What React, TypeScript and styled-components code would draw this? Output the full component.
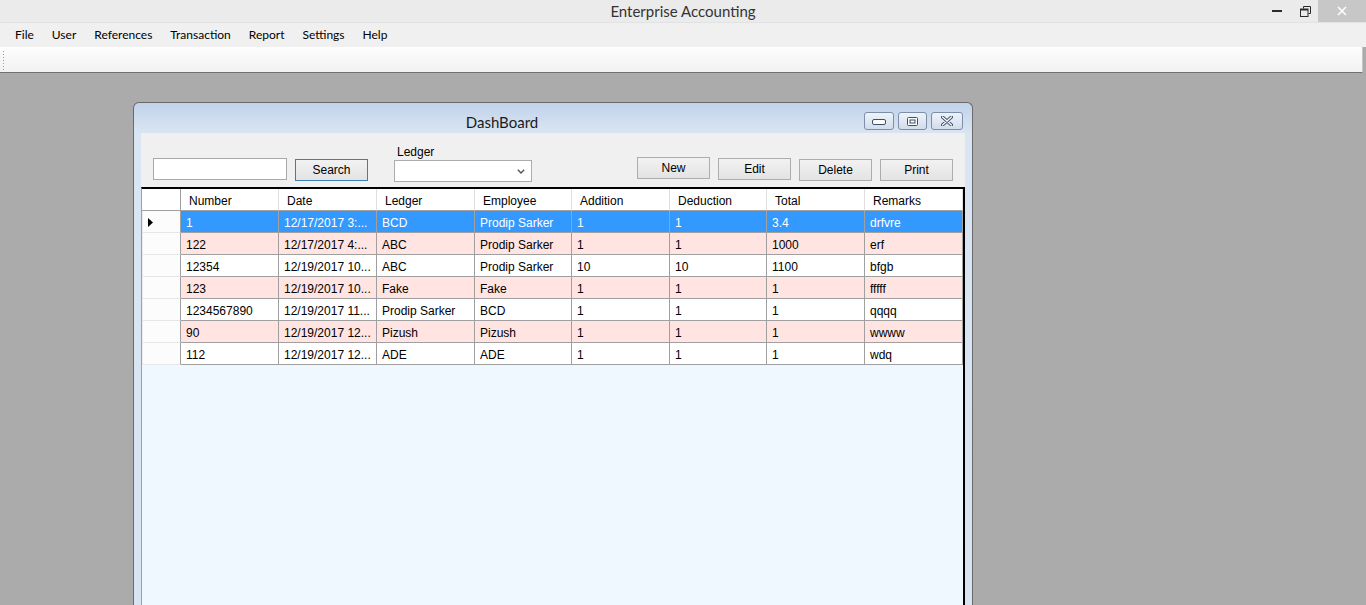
import React from "react";
import styled, { createGlobalStyle } from "styled-components";

const GlobalStyle = createGlobalStyle`
  html, body { margin: 0; padding: 0; }
  body {
    width: 1366px;
    height: 605px;
    overflow: hidden;
    background: #ababab;
    font-family: "Liberation Sans", Arial, sans-serif;
  }
  * { box-sizing: border-box; }
`;

const Screen = styled.div`
  width: 1366px;
  height: 605px;
  display: flex;
  flex-direction: column;
  overflow: hidden;
`;

/* ---------- main window chrome ---------- */
const TitleBar = styled.div`
  flex: none;
  height: 23px;
  display: grid;
  grid-template-columns: 1fr auto 1fr;
  align-items: start;
  background: #ebebeb;
  border-bottom: 1px solid #e2e2e2;
`;

const AppTitle = styled.div`
  grid-column: 2;
  font-family: Lato, "Noto Sans", sans-serif;
  font-size: 15px;
  line-height: 23px;
  color: #333;
`;

const WinControls = styled.div`
  grid-column: 3;
  justify-self: end;
  display: flex;
  height: 22px;
`;

const WinButton = styled.div<{ $w: number; $close?: boolean }>`
  width: ${(p) => p.$w}px;
  height: 22px;
  display: flex;
  align-items: center;
  justify-content: center;
  background: ${(p) => (p.$close ? "#c7c7c7" : "transparent")};
`;

const MenuBar = styled.div`
  flex: none;
  height: 24px;
  display: flex;
  align-items: center;
  padding-left: 6px;
  background: #f0f0f0;
`;

const MenuItem = styled.div`
  padding: 0 9px;
  font-family: Lato, "Noto Sans", sans-serif;
  font-size: 12px;
  line-height: 24px;
  color: #000;
`;

const ToolStrip = styled.div`
  flex: none;
  height: 26px;
  display: flex;
  align-items: flex-start;
  background: linear-gradient(#fdfdfd, #f2f2f2);
  border-bottom: 1px solid #707070;
  border-right: 1px solid #c4c4c4;
  margin-right: 3px;
`;

const ToolGrip = styled.div`
  width: 1px;
  height: 19px;
  margin: 4px 0 0 3px;
  background: repeating-linear-gradient(to bottom, #9a9a9a 0 1px, transparent 1px 3px);
`;

const MdiArea = styled.div`
  flex: 1;
  min-height: 0;
  overflow: hidden;
  background: #ababab;
  padding: 29px 0 0 133px;
`;

/* ---------- child window ---------- */
const ChildWindow = styled.div`
  width: 840px;
  height: 540px;
  display: flex;
  flex-direction: column;
  border: 1px solid #6a6a6a;
  border-bottom: none;
  border-radius: 6px 6px 0 0;
  background: linear-gradient(to bottom, #c1d3ea 0px, #d9e5f2 30px, #d8e4f1 100%);
`;

const ChildTitle = styled.div`
  flex: none;
  height: 30px;
  display: flex;
  align-items: flex-start;
  padding: 9px 9px 0 6px;
`;

const ChildTitleText = styled.div`
  flex: 1;
  margin-top: 2px;
  text-align: center;
  font-family: Lato, "Noto Sans", sans-serif;
  font-size: 15px;
  line-height: 17px;
  color: #1b1b1b;
`;

const ChildControls = styled.div`
  display: flex;
  gap: 4px;
`;

const ChildButton = styled.div<{ $w: number }>`
  width: ${(p) => p.$w}px;
  height: 18px;
  display: flex;
  align-items: center;
  justify-content: center;
  border: 1px solid #7d8ea8;
  border-radius: 3px;
  background: linear-gradient(#eef3fa, #d2ddeb);
`;

const ClientArea = styled.div`
  flex: 1;
  margin: 0 7px;
  display: flex;
  flex-direction: column;
  background: #f0f0f0;
`;

const TopBar = styled.div`
  flex: none;
  height: 54px;
  display: flex;
  align-items: flex-start;
  padding: 0 12px;
`;

const TextBox = styled.input`
  width: 134px;
  height: 22px;
  margin-top: 25px;
  border: 1px solid #a9a9a9;
  background: #fff;
  padding: 0 3px;
  font: 12px "Liberation Sans", Arial, sans-serif;
  outline: none;
`;

const Button = styled.button<{ $top: number; $focused?: boolean }>`
  width: 73px;
  height: 22px;
  margin-top: ${(p) => p.$top}px;
  padding: 0;
  border: 1px solid ${(p) => (p.$focused ? "#3c7fb1" : "#adadad")};
  background: linear-gradient(#f2f2f2, #e3e3e3);
  font-family: "Liberation Sans", Arial, sans-serif;
  font-size: 12px;
  color: #000;
  line-height: 20px;
`;

const SearchButton = styled(Button)`
  margin-left: 8px;
`;

const LedgerGroup = styled.div`
  margin-left: 26px;
  margin-top: 12px;
  display: flex;
  flex-direction: column;
  width: 138px;
`;

const FieldLabel = styled.div`
  margin-left: 3px;
  font-size: 12px;
  line-height: 14px;
  color: #000;
`;

const ComboBox = styled.div`
  height: 22px;
  margin-top: 1px;
  display: flex;
  align-items: center;
  justify-content: flex-end;
  padding-right: 6px;
  border: 1px solid #acacac;
  background: #fff;
`;

const ButtonGroup = styled.div`
  margin-left: auto;
  display: flex;
  align-items: flex-start;
  gap: 8px;
`;

/* ---------- data grid ---------- */
const DataGrid = styled.div`
  flex: 1;
  background: #f0f8ff;
  border-top: 2px solid #000;
  border-right: 2px solid #000;
  border-left: 1px solid #a0a0a0;
`;

const GridRow = styled.div`
  display: grid;
  grid-template-columns: 39px 98px 98px 98px 97px 98px 97px 98px 98px;
  height: 22px;
`;

type Tone = "selected" | "pink" | "white";

const toneBg: Record<Tone, string> = {
  selected: "#3399ff",
  pink: "#ffe4e1",
  white: "#ffffff",
};

const HeaderCell = styled.div`
  background: #fff;
  border-right: 1px solid #dedede;
  border-bottom: 1px solid #a0a0a0;
  padding: 3px 0 0 8px;
  font-size: 12px;
  line-height: 18px;
  color: #000;
  white-space: nowrap;
`;

const CornerCell = styled(HeaderCell)`
  border-right: 1px solid #a0a0a0;
`;

const RowHeaderCell = styled.div`
  display: flex;
  align-items: center;
  padding: 1px 0 0 5px;
  background: #fcfcfc;
  border-right: 1px solid #a0a0a0;
  border-bottom: 1px solid #e6e6e6;
  border-left: 1px solid #ececec;
`;

const Cell = styled.div<{ $tone: Tone }>`
  background: ${(p) => toneBg[p.$tone]};
  color: ${(p) => (p.$tone === "selected" ? "#fff" : "#000")};
  border-right: 1px solid #a0a0a0;
  border-bottom: 1px solid #a0a0a0;
  padding: 3px 0 0 5px;
  font-size: 12px;
  line-height: 18px;
  white-space: nowrap;
  overflow: hidden;
`;

const columns = ["Number", "Date", "Ledger", "Employee", "Addition", "Deduction", "Total", "Remarks"];

const rows: { tone: Tone; cells: string[] }[] = [
  { tone: "selected", cells: ["1", "12/17/2017 3:...", "BCD", "Prodip Sarker", "1", "1", "3.4", "drfvre"] },
  { tone: "pink", cells: ["122", "12/17/2017 4:...", "ABC", "Prodip Sarker", "1", "1", "1000", "erf"] },
  { tone: "white", cells: ["12354", "12/19/2017 10...", "ABC", "Prodip Sarker", "10", "10", "1100", "bfgb"] },
  { tone: "pink", cells: ["123", "12/19/2017 10...", "Fake", "Fake", "1", "1", "1", "fffff"] },
  { tone: "white", cells: ["1234567890", "12/19/2017 11...", "Prodip Sarker", "BCD", "1", "1", "1", "qqqq"] },
  { tone: "pink", cells: ["90", "12/19/2017 12...", "Pizush", "Pizush", "1", "1", "1", "wwww"] },
  { tone: "white", cells: ["112", "12/19/2017 12...", "ADE", "ADE", "1", "1", "1", "wdq"] },
];

/* ---------- icons ---------- */
const MinimizeIcon = () => (
  <svg width="10" height="2" viewBox="0 0 10 2">
    <rect width="10" height="2" fill="#2b2b2b" />
  </svg>
);

const RestoreIcon = () => (
  <svg width="11" height="11" viewBox="0 0 11 11">
    <path d="M3.5 2.5 V0.5 H10.5 V7.5 H8.5" fill="none" stroke="#2b2b2b" strokeWidth="1" />
    <rect x="0.5" y="3" width="7.5" height="7.5" fill="none" stroke="#2b2b2b" strokeWidth="1" />
    <rect x="0.5" y="3" width="7.5" height="1.5" fill="#2b2b2b" />
  </svg>
);

const CloseIcon = () => (
  <svg width="10" height="10" viewBox="0 0 10 10">
    <path d="M1 1 L9 9 M9 1 L1 9" stroke="#fff" strokeWidth="1.5" />
  </svg>
);

const ChildMinIcon = () => (
  <svg width="14" height="7" viewBox="0 0 14 7">
    <rect x="0.5" y="1.5" width="13" height="5" rx="1.5" fill="#fbfcfe" stroke="#3f4f66" />
  </svg>
);

const ChildMaxIcon = () => (
  <svg width="11" height="9" viewBox="0 0 11 9">
    <rect x="0.5" y="0.5" width="10" height="8" rx="1" fill="#fbfcfe" stroke="#3f4f66" />
    <rect x="3" y="3" width="5" height="3" fill="none" stroke="#3f4f66" strokeWidth="1" />
  </svg>
);

const ChildCloseIcon = () => (
  <svg width="12" height="10" viewBox="0 0 12 10">
    <path d="M1.5 1 L10.5 9 M10.5 1 L1.5 9" stroke="#3f4f66" strokeWidth="3.2" strokeLinecap="round" />
    <path d="M1.5 1 L10.5 9 M10.5 1 L1.5 9" stroke="#f5f8fc" strokeWidth="1.4" strokeLinecap="round" />
  </svg>
);

const ChevronIcon = () => (
  <svg width="8" height="5" viewBox="0 0 8 5">
    <path d="M0.8 0.8 L4 4 L7.2 0.8" fill="none" stroke="#555" strokeWidth="1.4" />
  </svg>
);

const RowMarker = () => (
  <svg width="5" height="9" viewBox="0 0 5 9">
    <path d="M0 0 L5 4.5 L0 9 Z" fill="#000" />
  </svg>
);

export default function App() {
  return (
    <>
      <GlobalStyle />
      <Screen>
        <TitleBar>
          <AppTitle>Enterprise Accounting</AppTitle>
          <WinControls>
            <WinButton $w={30}>
              <MinimizeIcon />
            </WinButton>
            <WinButton $w={26}>
              <RestoreIcon />
            </WinButton>
            <WinButton $w={48} $close>
              <CloseIcon />
            </WinButton>
          </WinControls>
        </TitleBar>

        <MenuBar>
          {["File", "User", "References", "Transaction", "Report", "Settings", "Help"].map((m) => (
            <MenuItem key={m}>{m}</MenuItem>
          ))}
        </MenuBar>

        <ToolStrip>
          <ToolGrip />
        </ToolStrip>

        <MdiArea>
          <ChildWindow>
            <ChildTitle>
              <ChildTitleText>DashBoard</ChildTitleText>
              <ChildControls>
                <ChildButton $w={30}>
                  <ChildMinIcon />
                </ChildButton>
                <ChildButton $w={29}>
                  <ChildMaxIcon />
                </ChildButton>
                <ChildButton $w={32}>
                  <ChildCloseIcon />
                </ChildButton>
              </ChildControls>
            </ChildTitle>

            <ClientArea>
              <TopBar>
                <TextBox readOnly value="" />
                <SearchButton $top={26} $focused>
                  Search
                </SearchButton>
                <LedgerGroup>
                  <FieldLabel>Ledger</FieldLabel>
                  <ComboBox>
                    <ChevronIcon />
                  </ComboBox>
                </LedgerGroup>
                <ButtonGroup>
                  <Button $top={24}>New</Button>
                  <Button $top={25}>Edit</Button>
                  <Button $top={26}>Delete</Button>
                  <Button $top={26}>Print</Button>
                </ButtonGroup>
              </TopBar>

              <DataGrid>
                <GridRow>
                  <CornerCell />
                  {columns.map((c) => (
                    <HeaderCell key={c}>{c}</HeaderCell>
                  ))}
                </GridRow>
                {rows.map((r, i) => (
                  <GridRow key={i}>
                    <RowHeaderCell>{r.tone === "selected" ? <RowMarker /> : null}</RowHeaderCell>
                    {r.cells.map((c, j) => (
                      <Cell key={j} $tone={r.tone}>
                        {c}
                      </Cell>
                    ))}
                  </GridRow>
                ))}
              </DataGrid>
            </ClientArea>
          </ChildWindow>
        </MdiArea>
      </Screen>
    </>
  );
}
